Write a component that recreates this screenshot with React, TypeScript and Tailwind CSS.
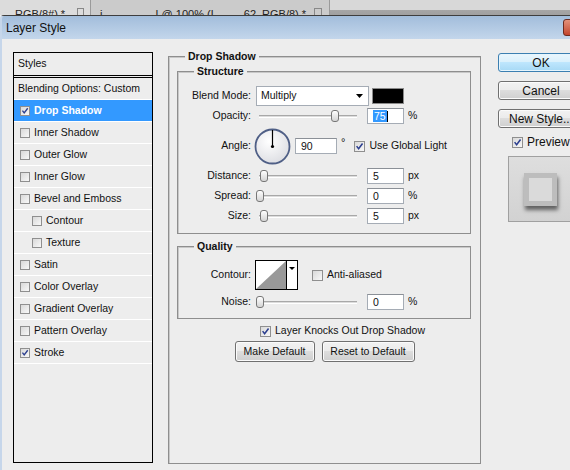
import clsx from 'clsx';

const styleRows: { label: string; checked?: boolean; indent?: boolean; active?: boolean }[] = [
  { label: 'Drop Shadow', checked: true, active: true },
  { label: 'Inner Shadow' },
  { label: 'Outer Glow' },
  { label: 'Inner Glow' },
  { label: 'Bevel and Emboss' },
  { label: 'Contour', indent: true },
  { label: 'Texture', indent: true },
  { label: 'Satin' },
  { label: 'Color Overlay' },
  { label: 'Gradient Overlay' },
  { label: 'Pattern Overlay' },
  { label: 'Stroke', checked: true },
];

function Box({ checked = false, big = false }: { checked?: boolean; big?: boolean }) {
  return (
    <span
      className={clsx(
        'flex shrink-0 items-center justify-center border border-[#8f8f8f] bg-gradient-to-br from-[#d9d9d9] to-[#f8f8f8]',
        big ? 'h-[11px] w-[11px]' : 'h-[10px] w-[10px]'
      )}
    >
      {checked && (
        <svg viewBox="0 0 10 10" className="h-full w-full">
          <path d="M1.8 4.6 L4 7.4 L8.4 1.6" fill="none" stroke="#2c3f8f" strokeWidth="1.7" />
        </svg>
      )}
    </span>
  );
}

function Field({ value, width = 'w-[37px]', selected = false }: { value: string; width?: string; selected?: boolean }) {
  return (
    <div
      className={clsx(
        'flex h-[16px] shrink-0 items-center border border-[#a5acb5] border-t-[#8b9097] bg-white pl-[5px] text-[10.5px] leading-none',
        width
      )}
    >
      {selected ? (
        <>
          <span className="bg-[#3399ff] px-px py-[1px] text-white">{value}</span>
          <span className="h-[11px] w-px bg-black" />
        </>
      ) : (
        value
      )}
    </div>
  );
}

function Slider({ thumb }: { thumb: string }) {
  return (
    <div className="relative flex h-[14px] w-[101px] shrink-0 items-center pl-[3px]">
      <div className="h-[3px] w-full border-t border-[#a8a8a8] border-b border-b-white bg-[#dcdcdc]" />
      <div
        className={clsx(
          'absolute top-[1px] h-[12px] w-[8px] rounded-[3px] border border-[#777] bg-gradient-to-b from-white to-[#d4d4d4]',
          thumb
        )}
      />
    </div>
  );
}

function Label({ text }: { text: string }) {
  return <div className="w-[73px] shrink-0 text-right text-[10.5px]">{text}</div>;
}

function SliderRow({ label, value, unit, thumb }: { label: string; value: string; unit: string; thumb: string }) {
  return (
    <div className="flex h-[20px] items-center">
      <Label text={label} />
      <div className="ml-[5px]">
        <Slider thumb={thumb} />
      </div>
      <div className="ml-[10px]">
        <Field value={value} />
      </div>
      <span className="ml-[4px] text-[10.5px]">{unit}</span>
    </div>
  );
}

function GroupHead({ text }: { text: string }) {
  return (
    <div className="-mt-[7px] ml-[16px] w-fit bg-[#ededed] px-[3px] text-[10.5px] font-bold leading-[13px]">{text}</div>
  );
}

function Dial() {
  return (
    <svg width="37" height="37" viewBox="0 0 37 37" className="shrink-0">
      <defs>
        <radialGradient id="dialfill" cx="0.4" cy="0.35" r="0.7">
          <stop offset="0" stopColor="#ffffff" />
          <stop offset="1" stopColor="#dcdde2" />
        </radialGradient>
      </defs>
      <circle cx="18.5" cy="18.5" r="17" fill="url(#dialfill)" stroke="#4f5f86" strokeWidth="1.8" />
      <line x1="18.5" y1="18.5" x2="18.5" y2="2" stroke="#000" strokeWidth="1.2" />
      <circle cx="18.5" cy="18.5" r="1.6" fill="#000" />
    </svg>
  );
}

function WinButton({ text, width, primary = false }: { text: string; width: string; primary?: boolean }) {
  return (
    <div
      className={clsx(
        'flex shrink-0 items-center justify-center rounded-[3px] border',
        primary
          ? 'border-[#3c7fb1] bg-[linear-gradient(#eaf6fd,#d9f0fc_50%,#bee6fd_50%,#a7d9f5)] shadow-[inset_0_0_0_1px_#e6f5fd]'
          : 'border-[#707070] bg-[linear-gradient(#f2f2f2,#ebebeb_50%,#dddddd_50%,#cfcfcf)] shadow-[inset_0_0_0_1px_#fbfbfb]',
        width
      )}
    >
      {text}
    </div>
  );
}

export default function App() {
  return (
    <div className="flex h-[470px] w-[570px] flex-col overflow-hidden bg-[#ededed] font-['Liberation_Sans',Arial,sans-serif] text-[#111]">
      {/* background document tabs, mostly hidden under the dialog */}
      <div className="flex h-[15px] shrink-0 overflow-hidden text-[11px] text-[#222]">
        <div className="flex w-[90px] shrink-0 bg-[#dcdcdc] pl-[15px] pt-[8px] leading-[12px]">
          <span>RGB/8#) *</span>
          <span className="ml-[12px] h-[8px] w-[7px] border border-[#888]" />
        </div>
        <div className="w-px shrink-0 bg-[#9a9a9a]" />
        <div className="flex w-[238px] shrink-0 bg-[#cbcbcb] pt-[8px] leading-[12px]">
          <span className="ml-[9px]">i</span>
          <span className="ml-[53px]">L@ 100% (L</span>
          <span className="ml-[27px]">62, RGB/8) *</span>
          <span className="ml-[8px] h-[8px] w-[8px] border border-[#888]" />
        </div>
        <div className="w-px shrink-0 bg-[#9a9a9a]" />
        <div className="flex-1 bg-[linear-gradient(#d8d8d8,#d8d8d8_65%,#a6a6a6_66%,#a0a0a0)]" />
      </div>

      {/* dialog */}
      <div className="flex flex-1 flex-col overflow-hidden rounded-tl-[4px] border-l-2 border-t border-l-[#c6d6ea] border-t-[#3e3e3e]">
        <div className="flex h-[23px] shrink-0 items-center overflow-hidden bg-gradient-to-b from-[#a2bddb] to-[#c3d6eb]">
          <span className="pl-[4px] text-[12px]">Layer Style</span>
          <div className="ml-auto -mr-[35px] h-[17px] w-[42px] shrink-0 rounded-[3px] border border-[#6d2b1f] bg-gradient-to-b from-[#e3917a] to-[#c2432b]" />
        </div>

        <div className="flex flex-1 pl-[11px] pt-[13px]">
          {/* styles list */}
          <div className="flex h-[411px] w-[140px] shrink-0 flex-col border border-black text-[10.5px]">
            <div className="flex h-[22px] shrink-0 items-center pl-[4px]">Styles</div>
            <div className="h-[3px] shrink-0 border-y border-black" />
            <div className="flex h-[22px] shrink-0 items-center border-b border-white pl-[4px]">Blending Options: Custom</div>
            {styleRows.map((r) => (
              <div
                key={r.label}
                className={clsx(
                  'flex h-[22px] shrink-0 items-center gap-[4px] border-b border-white',
                  r.indent ? 'pl-[18px]' : 'pl-[6px]',
                  r.active && 'bg-[#3399ff] font-bold text-white'
                )}
              >
                <Box checked={r.checked} />
                <span>{r.label}</span>
              </div>
            ))}
          </div>

          {/* drop shadow settings */}
          <div className="ml-[15px] mt-[4px] flex h-[408px] w-[313px] shrink-0 flex-col border border-[#8e8e8e] shadow-[inset_1px_1px_0_#c8c8c8]">
            <GroupHead text="Drop Shadow" />

            <div className="ml-[8px] mt-[8px] flex w-[294px] flex-col border border-[#8e8e8e] pb-[7px] shadow-[inset_1px_1px_0_#c8c8c8]">
              <GroupHead text="Structure" />
              <div className="mt-[8px] flex flex-col">
                <div className="flex h-[20px] items-center">
                  <Label text="Blend Mode:" />
                  <div className="ml-[5px] flex h-[20px] w-[113px] shrink-0 items-center border border-[#a5acb5] bg-white pl-[4px] pr-[5px] text-[10.5px]">
                    <span>Multiply</span>
                    <svg width="7" height="4" viewBox="0 0 7 4" className="ml-auto">
                      <path d="M0 0 H7 L3.5 4 Z" fill="#000" />
                    </svg>
                  </div>
                  <div className="ml-[3px] h-[16px] w-[32px] shrink-0 border border-[#8a8a8a] bg-black" />
                </div>

                <div className="flex h-[20px] items-center">
                  <Label text="Opacity:" />
                  <div className="ml-[5px]">
                    <Slider thumb="left-[75px]" />
                  </div>
                  <div className="ml-[10px]">
                    <Field value="75" selected />
                  </div>
                  <span className="ml-[4px] text-[10.5px]">%</span>
                </div>

                <div className="flex h-[40px] items-center">
                  <Label text="Angle:" />
                  <div className="ml-[3px]">
                    <Dial />
                  </div>
                  <div className="ml-[4px]">
                    <Field value="90" width="w-[42px]" />
                  </div>
                  <span className="ml-[4px] -mt-[8px] text-[11px]">°</span>
                  <div className="ml-[9px] flex items-center gap-[4px] text-[10.5px]">
                    <Box checked big />
                    <span>Use Global Light</span>
                  </div>
                </div>

                <SliderRow label="Distance:" value="5" unit="px" thumb="left-[4px]" />
                <SliderRow label="Spread:" value="0" unit="%" thumb="left-0" />
                <SliderRow label="Size:" value="5" unit="px" thumb="left-[4px]" />
              </div>
            </div>

            <div className="ml-[8px] mt-[12px] flex w-[294px] flex-col border border-[#8e8e8e] pb-[6px] shadow-[inset_1px_1px_0_#c8c8c8]">
              <GroupHead text="Quality" />
              <div className="mt-[5px] flex flex-col">
                <div className="flex h-[34px] items-center">
                  <Label text="Contour:" />
                  <div className="ml-[4px] flex h-[30px] w-[43px] shrink-0 border border-black bg-white">
                    <svg width="30" height="28" viewBox="0 0 30 28" className="shrink-0">
                      <rect width="30" height="28" fill="#fff" />
                      <path d="M0 28 L30 0 V28 Z" fill="#999" />
                    </svg>
                    <div className="flex flex-1 justify-center border-l border-black pt-[6px]">
                      <svg width="6" height="3" viewBox="0 0 6 3">
                        <path d="M0 0 H6 L3 3 Z" fill="#000" />
                      </svg>
                    </div>
                  </div>
                  <div className="ml-[14px] flex items-center gap-[4px] text-[10.5px]">
                    <Box big />
                    <span>Anti-aliased</span>
                  </div>
                </div>
                <SliderRow label="Noise:" value="0" unit="%" thumb="left-0" />
              </div>
            </div>

            <div className="mt-[2px] flex h-[20px] items-center gap-[4px] pl-[91px] text-[10.5px]">
              <Box checked big />
              <span>Layer Knocks Out Drop Shadow</span>
            </div>
            <div className="flex h-[21px] justify-center gap-[7px] text-[10.5px]">
              <WinButton text="Make Default" width="w-[80px]" />
              <WinButton text="Reset to Default" width="w-[93px]" />
            </div>
          </div>

          {/* right column */}
          <div className="ml-[17px] flex w-[86px] shrink-0 flex-col text-[12px]">
            <div className="mt-[1px] flex h-[19px]">
              <WinButton text="OK" width="w-[86px]" primary />
            </div>
            <div className="mt-[9px] flex h-[19px]">
              <WinButton text="Cancel" width="w-[86px]" />
            </div>
            <div className="mt-[9px] flex h-[19px]">
              <WinButton text="New Style..." width="w-[86px]" />
            </div>
            <div className="mt-[4px] flex h-[20px] items-center gap-[4px] pl-[14px]">
              <Box checked big />
              <span>Preview</span>
            </div>
            <div className="ml-[10px] mt-[4px] h-[66px] w-[66px] shrink-0 border border-[#a0a0a0] bg-gradient-to-b from-[#dedede] to-[#d2d2d2] pl-[15px] pt-[16px]">
              <div className="h-[33px] w-[33px] bg-[#bdbdbd] p-[5px] shadow-[1px_4px_4px_rgba(0,0,0,0.55)]">
                <div className="h-full w-full bg-[#dadada]" />
              </div>
            </div>
          </div>
        </div>
      </div>
    </div>
  );
}
